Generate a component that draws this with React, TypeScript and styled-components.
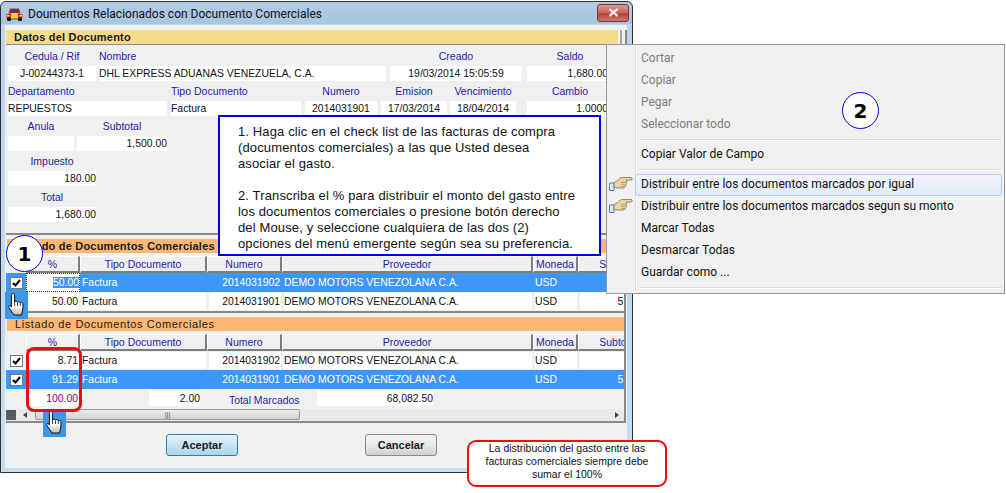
import React from "react";
import styled, { createGlobalStyle } from "styled-components";

const GlobalStyle = createGlobalStyle`
  html, body { margin: 0; padding: 0; background: #fff; }
  body { font-family: "Liberation Sans", Arial, sans-serif; }
`;

const UI_FONT = `Roboto, "Noto Sans", sans-serif`;
const LABEL = "#1c1ca8";
const GRID = "20px 54px 127px 75px 251px 45px 82px";

const Canvas = styled.div`
  position: relative;
  width: 1006px;
  height: 493px;
  overflow: hidden;
`;

const Window = styled.div`
  box-sizing: border-box;
  width: 633px;
  height: 472px;
  margin-top: 1px;
  display: flex;
  flex-direction: column;
  padding: 0 6px 5px 5px;
  background: linear-gradient(#b4cbe2, #a9c4de 22px, #bcd5ea 22px, #c8def0);
  border: 1px solid #2b3138;
  border-radius: 6px 6px 0 0;
`;

const TitleBar = styled.div`
  display: flex;
  align-items: center;
  gap: 5px;
  height: 24px;
  flex: none;
  font-family: ${UI_FONT};
  font-size: 12px;
  color: #111;
`;

const CloseButton = styled.div`
  margin-left: auto;
  margin-right: -3px;
  margin-top: -3px;
  width: 30px;
  height: 16px;
  display: flex;
  align-items: center;
  justify-content: center;
  border: 1px solid #6e3b38;
  border-radius: 3px;
  background: linear-gradient(#dc9a92, #c8625a 50%, #b23f35 55%, #cf7a6e);
`;

const Body = styled.div`
  flex: 1;
  display: flex;
  flex-direction: column;
  min-height: 0;
  background: #f0f0f0;
  box-shadow: 0 0 0 1px #e8f1f8;
`;

const DocHeader = styled.div`
  display: flex;
  height: 20px;
  flex: none;
  box-sizing: border-box;
  padding-top: 4px;
  background: #f0f0f0;
`;

const YellowBar = styled.div`
  width: 612px;
  height: 15px;
  padding-left: 8px;
  box-sizing: border-box;
  background: #f5dc8a;
  border-bottom: 1px solid #8c8c8c;
  font-size: 11px;
  font-weight: bold;
  line-height: 14px;
  letter-spacing: 0.2px;
  color: #1a1a1a;
`;

const Grip = styled.div`
  width: 2px;
  height: 15px;
  margin-left: 2px;
  background: #a8a8a8;
  box-shadow: 5px 0 0 #8a8a8a;
`;

const FormPanel = styled.div`
  flex: none;
  height: 189px;
  box-sizing: border-box;
  padding-left: 2px;
  width: 620px;
  border-bottom: 2px solid #8a8a8a;
`;

const FieldRow = styled.div`
  display: flex;
`;

const Field = styled.div<{ $w: number; $ml?: number; $tall?: boolean }>`
  width: ${(p) => p.$w}px;
  margin-left: ${(p) => p.$ml ?? 0}px;
  flex: none;
  padding-top: ${(p) => (p.$tall ? 1 : 0)}px;
`;

const FieldLabel = styled.div<{ $left?: boolean }>`
  height: 20px;
  line-height: 20px;
  font-size: 10.5px;
  color: ${LABEL};
  text-align: ${(p) => (p.$left ? "left" : "center")};
  white-space: nowrap;
`;

const FieldValue = styled.div<{ $align?: string; $inset?: number }>`
  height: 15px;
  line-height: 15px;
  background: #fff;
  font-size: 10.4px;
  color: #111;
  text-align: ${(p) => p.$align ?? "left"};
  padding-right: ${(p) => p.$inset ?? 0}px;
  white-space: nowrap;
  overflow: hidden;
`;

const ListSection = styled.div<{ $lined?: boolean }>`
  flex: none;
  box-sizing: border-box;
  width: 620px;
  padding-top: 4px;
  overflow: hidden;
  border-right: 2px solid #8a8a8a;
  ${(p) => (p.$lined ? "border-bottom: 2px solid #8a8a8a;" : "")}
`;

const OrangeBar = styled.div<{ $bold?: boolean }>`
  width: 617px;
  margin-left: 1px;
  height: 14px;
  padding-left: 8px;
  box-sizing: border-box;
  background: #feb773;
  font-size: 11px;
  line-height: 14px;
  font-weight: ${(p) => (p.$bold ? "bold" : "normal")};
  letter-spacing: ${(p) => (p.$bold ? "0.2px" : "0.6px")};
  color: #1a1a1a;
`;

const HeadRow = styled.div`
  display: grid;
  grid-template-columns: ${GRID};
  height: 17px;
  margin-top: 3px;
`;

const HeadCell = styled.div`
  box-sizing: border-box;
  height: 17px;
  line-height: 15px;
  font-size: 10.5px;
  color: ${LABEL};
  text-align: center;
  white-space: nowrap;
  overflow: hidden;
  background: #f0f0f0;
  border-top: 1px solid #fff;
  border-left: 1px solid #fff;
  border-right: 2px solid #7d7d7d;
  border-bottom: 2px solid #7d7d7d;
`;

const Row = styled.div<{ $selected?: boolean }>`
  display: grid;
  grid-template-columns: ${GRID};
  width: 618px;
  height: 19px;
  background: ${(p) => (p.$selected ? "#3d97fb" : "transparent")};
  color: ${(p) => (p.$selected ? "#fff" : "#111")};
`;

const Cell = styled.div<{ $selected?: boolean; $align?: string }>`
  margin: 1px 1px 1px 2px;
  padding: 0 1px 0 0;
  line-height: 17px;
  font-size: 10.4px;
  text-align: ${(p) => p.$align ?? "left"};
  white-space: nowrap;
  overflow: hidden;
  background: ${(p) => (p.$selected ? "transparent" : "#fff")};
`;

const FocusCell = styled(Cell)`
  margin: 0;
  background: #fff;
  color: #111;
  outline: 1px dotted #333;
  outline-offset: -1px;
  line-height: 19px;
  padding-right: 1px;
`;

const Marked = styled.span`
  background: #3d97fb;
  color: #fff;
`;

const CheckCell = styled.div`
  display: flex;
  align-items: center;
  justify-content: center;
`;

const CheckBox = styled.div`
  width: 11px;
  height: 10px;
  display: flex;
  align-items: center;
  justify-content: center;
  background: #fff;
  border: 1px solid #777;
`;

const Totals = styled.div`
  display: flex;
  align-items: center;
  height: 19px;
  width: 614px;
  font-size: 10.4px;
`;

const TotalValue = styled.div<{ $w: number; $ml: number; $color?: string }>`
  width: ${(p) => p.$w}px;
  margin-left: ${(p) => p.$ml}px;
  height: 15px;
  line-height: 15px;
  flex: none;
  background: #fff;
  text-align: right;
  color: ${(p) => p.$color ?? "#111"};
`;

const TotalLabel = styled.div`
  margin-left: 29px;
  width: 74px;
  color: ${LABEL};
  white-space: nowrap;
  padding-top: 3px;
`;

const ScrollTrack = styled.div`
  display: flex;
  align-items: center;
  height: 11px;
  margin-top: 1px;
  border-bottom: 2px solid #8a8a8a;
  padding-bottom: 1px;
  background: #e9e9e9;
`;

const ScrollCorner = styled.div`
  width: 10px;
  height: 10px;
  background: #5a5a5a;
`;

const ScrollArrow = styled.div<{ $right?: boolean }>`
  width: 0;
  height: 0;
  margin-left: ${(p) => (p.$right ? "auto" : "7px")};
  margin-right: ${(p) => (p.$right ? "5px" : "0")};
  border-top: 3px solid transparent;
  border-bottom: 3px solid transparent;
  ${(p) => (p.$right ? "border-left: 4px solid #444;" : "border-right: 4px solid #444;")}
`;

const ScrollThumb = styled.div`
  width: 263px;
  height: 9px;
  margin-left: 8px;
  display: flex;
  align-items: center;
  justify-content: center;
  background: linear-gradient(#eee, #cfcfcf);
  border: 1px solid #9a9a9a;
  border-radius: 2px;
  font-size: 7px;
  color: #555;
`;

const ButtonBar = styled.div`
  display: flex;
  padding: 11px 0 0 160px;
  gap: 127px;
`;

const Button = styled.div<{ $primary?: boolean }>`
  width: 72px;
  height: 22px;
  box-sizing: border-box;
  line-height: 20px;
  text-align: center;
  font-size: 11px;
  font-weight: bold;
  color: #1a1a1a;
  border-radius: 3px;
  border: 1px solid ${(p) => (p.$primary ? "#2f7f9f" : "#8a8a8a")};
  background: ${(p) =>
    p.$primary
      ? "linear-gradient(#e4f4fb, #c6e4f3 50%, #a9d5ea)"
      : "linear-gradient(#f4f4f4, #e8e8e8 50%, #cfcfcf)"};
`;

/* Things that lie over the window */

const Callout = styled.div`
  position: absolute;
  left: 218px;
  top: 115px;
  width: 383px;
  height: 141px;
  box-sizing: border-box;
  padding: 7px 8px 0 18px;
  background: #fff;
  border: 2px solid #0000e0;
  font-size: 13px;
  line-height: 16px;
  letter-spacing: 0.13px;
  color: #111;
`;

const CalloutPara = styled.p`
  margin: 0 0 16px;
`;

const Menu = styled.div`
  position: absolute;
  left: 606px;
  top: 44px;
  width: 399px;
  height: 250px;
  box-sizing: border-box;
  padding: 3px 2px;
  background: #f0f0f0;
  border: 1px solid #979797;
  font-family: ${UI_FONT};
  font-size: 12px;
  color: #111;
`;

const MenuGutter = styled.div`
  position: absolute;
  left: 28px;
  top: 2px;
  bottom: 2px;
  width: 1px;
  background: #e2e2e2;
  border-right: 1px solid #fff;
`;

const MenuItem = styled.div<{ $disabled?: boolean; $hover?: boolean }>`
  position: relative;
  height: 22px;
  line-height: 20px;
  box-sizing: border-box;
  padding-left: 32px;
  white-space: nowrap;
  color: ${(p) => (p.$disabled ? "#7d7d7d" : "#111")};
  ${(p) =>
    p.$hover
      ? `
    border: 1px solid #aecff7;
    border-radius: 3px;
    margin-left: 26px;
    padding-left: 5px;
    line-height: 19px;
    background: linear-gradient(#f3f6fb, #dfe9f6);
  `
      : ""}
`;

const MenuRule = styled.div`
  height: 8px;
  margin-left: 30px;
  display: flex;
  align-items: center;
  &::after {
    content: "";
    width: 100%;
    border-top: 1px solid #dcdcdc;
    border-bottom: 1px solid #fff;
  }
`;

const HandSlot = styled.span<{ $hover?: boolean }>`
  position: absolute;
  left: ${(p) => (p.$hover ? "-27px" : "0")};
  top: ${(p) => (p.$hover ? "1px" : "2px")};
  display: flex;
`;

const Step = styled.div<{ $x: number; $y: number }>`
  position: absolute;
  left: ${(p) => p.$x}px;
  top: ${(p) => p.$y}px;
  width: 37px;
  height: 37px;
  box-sizing: border-box;
  display: flex;
  align-items: center;
  justify-content: center;
  background: #fff;
  border: 1px solid #0000e0;
  border-radius: 50%;
  font-family: "DejaVu Sans", sans-serif;
  font-size: 20px;
  font-weight: bold;
  color: #000;
`;

const CursorTile = styled.div<{ $x: number; $y: number }>`
  position: absolute;
  left: ${(p) => p.$x}px;
  top: ${(p) => p.$y}px;
  width: 23px;
  height: 27px;
  background: #3d97e8;
  display: flex;
  align-items: flex-start;
  justify-content: center;
`;

const RedFrame = styled.div`
  position: absolute;
  left: 26px;
  top: 347px;
  width: 56px;
  height: 65px;
  box-sizing: border-box;
  border: 3px solid #ee0d0d;
  border-radius: 8px;
`;

const Note = styled.div`
  position: absolute;
  left: 467px;
  top: 440px;
  width: 200px;
  height: 47px;
  box-sizing: border-box;
  background: #fff;
  border: 2px solid #ee0d0d;
  border-radius: 9px;
  font-size: 10.5px;
  line-height: 13px;
  text-align: center;
  color: #111;
`;

const CarIcon = () => (
  <svg width="17" height="13" viewBox="0 0 17 13">
    <path d="M4 0.500h9l1.500 5h-12z" fill="#d81f1a" />
    <path d="M5 1.500h7l1 3H4z" fill="#3b3b8c" />
    <path d="M0.500 6h16v4h-16z" fill="#d81f1a" />
    <path d="M5.500 5h6l1 5.500h-8z" fill="#f0d92e" />
    <rect x="1" y="7" width="2.500" height="1.500" fill="#ffe27a" />
    <rect x="13.500" y="7" width="2.500" height="1.500" fill="#ffe27a" />
    <rect x="1" y="9.500" width="4" height="3.500" rx="1" fill="#111" />
    <rect x="12" y="9.500" width="4" height="3.500" rx="1" fill="#111" />
    <rect x="5" y="10.500" width="7" height="1" fill="#555" />
  </svg>
);

const HandCursor = () => (
  <svg width="19" height="25" viewBox="0 0 19 25">
    <defs>
      <linearGradient id="glove" x1="0" y1="0" x2="0" y2="1">
        <stop offset="0.55" stopColor="#fff" />
        <stop offset="1" stopColor="#bdbdbd" />
      </linearGradient>
    </defs>
    <path
      d="M6 1.500c1 0 1.600.7 1.600 1.800V10c.4-1 2.600-1 2.900.2.500-.9 2.500-.8 2.800.5.600-.7 2.500-.5 2.600 1 .2 2.200.1 5-.4 6.800L14.600 23H7l-5.200-7.500c-.7-1.200.7-2.600 2-1.600l.6 1V3.300C4.400 2.200 5 1.500 6 1.500z"
      fill="url(#glove)"
      stroke="#111"
      strokeWidth="1"
    />
    <path d="M7.600 10v4M10.500 10.500v3.500M13.300 11v3" stroke="#111" strokeWidth="0.800" fill="none" />
  </svg>
);

const PointingHand = () => (
  <svg width="24" height="16" viewBox="0 0 24 16">
    <path d="M0.500 7h4.500v7.500H0.500z" fill="#dfe7f2" stroke="#4a7fc0" strokeWidth="1" />
    <path
      d="M5 6.500 9 4.500C10 2.500 11.500 1.500 13.500 1.500h8.500c1.600 0 1.600 2.600 0 2.600h-5c1 .3 1 2 0 2.200.8.300.7 2-.2 2.100.5.500.3 2-.7 2.100-.3 1-1 1.300-1.500 1.500H9c-1.500 0-2.500-.5-4-1z"
      fill="#e8d6a8"
      stroke="#86703f"
      strokeWidth="0.800"
    />
    <path d="M12 6.300h5M12 8.400h4.800M12 10.500h3.600" stroke="#a48c56" strokeWidth="0.700" fill="none" />
  </svg>
);

const CheckMark = () => (
  <svg width="9" height="8" viewBox="0 0 9 8">
    <path d="M1 4l2.500 2.500L8 1" fill="none" stroke="#000" strokeWidth="2" />
  </svg>
);

type Doc = {
  pct: string;
  numero: string;
  sub: string;
  selected?: boolean;
  focus?: boolean;
};

const DocRow = ({ doc }: { doc: Doc }) => {
  const s = doc.selected;
  return (
    <Row $selected={s}>
      <CheckCell>
        <CheckBox>
          <CheckMark />
        </CheckBox>
      </CheckCell>
      {doc.focus ? (
        <FocusCell $align="right">
          <Marked>{doc.pct}</Marked>
        </FocusCell>
      ) : (
        <Cell $selected={s} $align="right">
          {doc.pct}
        </Cell>
      )}
      <Cell $selected={s}>Factura</Cell>
      <Cell $selected={s} $align="right">
        {doc.numero}
      </Cell>
      <Cell $selected={s}>DEMO MOTORS VENEZOLANA C.A.</Cell>
      <Cell $selected={s}>USD</Cell>
      <Cell $selected={s} $align="right">
        {doc.sub}
      </Cell>
    </Row>
  );
};

const Heads = () => (
  <HeadRow>
    <span />
    <HeadCell>%</HeadCell>
    <HeadCell>Tipo Documento</HeadCell>
    <HeadCell>Numero</HeadCell>
    <HeadCell>Proveedor</HeadCell>
    <HeadCell>Moneda</HeadCell>
    <HeadCell>Subtotal</HeadCell>
  </HeadRow>
);

const topDocs: Doc[] = [
  { pct: "50.00", numero: "2014031902", sub: "", selected: true, focus: true },
  { pct: "50.00", numero: "2014031901", sub: "5,000.00" },
];

const bottomDocs: Doc[] = [
  { pct: "8.71", numero: "2014031902", sub: "" },
  { pct: "91.29", numero: "2014031901", sub: "5,000.00", selected: true },
];

export default function App() {
  return (
    <Canvas>
      <GlobalStyle />
      <Window>
        <TitleBar>
          <CarIcon />
          <span>Doumentos Relacionados con Documento Comerciales</span>
          <CloseButton>
            <svg width="11" height="9" viewBox="0 0 11 9">
              <path d="M1.500 1l8 7M9.500 1l-8 7" stroke="#fff" strokeWidth="2.200" />
            </svg>
          </CloseButton>
        </TitleBar>
        <Body>
          <DocHeader>
            <YellowBar>Datos del Documento</YellowBar>
            <Grip />
          </DocHeader>
          <FormPanel>
            <FieldRow>
              <Field $w={88}>
                <FieldLabel>Cedula / Rif</FieldLabel>
                <FieldValue $align="center">J-00244373-1</FieldValue>
              </Field>
              <Field $w={287} $ml={3}>
                <FieldLabel $left>Nombre</FieldLabel>
                <FieldValue>DHL EXPRESS ADUANAS VENEZUELA, C.A.</FieldValue>
              </Field>
              <Field $w={132} $ml={4}>
                <FieldLabel>Creado</FieldLabel>
                <FieldValue $align="center">19/03/2014 15:05:59</FieldValue>
              </Field>
              <Field $w={86} $ml={5}>
                <FieldLabel>Saldo</FieldLabel>
                <FieldValue $align="right" $inset={5}>1,680.00</FieldValue>
              </Field>
            </FieldRow>
            <FieldRow>
              <Field $w={159}>
                <FieldLabel $left>Departamento</FieldLabel>
                <FieldValue>REPUESTOS</FieldValue>
              </Field>
              <Field $w={130} $ml={4}>
                <FieldLabel $left>Tipo Documento</FieldLabel>
                <FieldValue>Factura</FieldValue>
              </Field>
              <Field $w={72} $ml={4}>
                <FieldLabel>Numero</FieldLabel>
                <FieldValue $align="center">2014031901</FieldValue>
              </Field>
              <Field $w={66} $ml={4}>
                <FieldLabel>Emision</FieldLabel>
                <FieldValue $align="center">17/03/2014</FieldValue>
              </Field>
              <Field $w={66} $ml={3}>
                <FieldLabel>Vencimiento</FieldLabel>
                <FieldValue $align="center">18/04/2014</FieldValue>
              </Field>
              <Field $w={86} $ml={11}>
                <FieldLabel>Cambio</FieldLabel>
                <FieldValue $align="right" $inset={5}>1.0000</FieldValue>
              </Field>
            </FieldRow>
            <FieldRow>
              <Field $w={66}>
                <FieldLabel>Anula</FieldLabel>
                <FieldValue />
              </Field>
              <Field $w={90} $ml={3}>
                <FieldLabel>Subtotal</FieldLabel>
                <FieldValue $align="right">1,500.00</FieldValue>
              </Field>
            </FieldRow>
            <FieldRow>
              <Field $w={88}>
                <FieldLabel>Impuesto</FieldLabel>
                <FieldValue $align="right">180.00</FieldValue>
              </Field>
            </FieldRow>
            <FieldRow>
              <Field $w={88} $tall>
                <FieldLabel>Total</FieldLabel>
                <FieldValue $align="right">1,680.00</FieldValue>
              </Field>
            </FieldRow>
          </FormPanel>
          <ListSection $lined>
            <OrangeBar $bold>Listado de Documentos Comerciales</OrangeBar>
            <Heads />
            {topDocs.map((d) => (
              <DocRow key={d.numero} doc={d} />
            ))}
          </ListSection>
          <ListSection>
            <OrangeBar>Listado de Documentos Comerciales</OrangeBar>
            <Heads />
            {bottomDocs.map((d) => (
              <DocRow key={d.numero} doc={d} />
            ))}
            <Totals>
              <TotalValue $w={50} $ml={22} $color="#800080">
                100.00
              </TotalValue>
              <TotalValue $w={51} $ml={71}>
                2.00
              </TotalValue>
              <TotalLabel>Total Marcados</TotalLabel>
              <TotalValue $w={116} $ml={14}>
                68,082.50
              </TotalValue>
            </Totals>
            <ScrollTrack>
              <ScrollCorner />
              <ScrollArrow />
              <ScrollThumb>|||</ScrollThumb>
              <ScrollArrow $right />
            </ScrollTrack>
          </ListSection>
          <ButtonBar>
            <Button $primary>Aceptar</Button>
            <Button>Cancelar</Button>
          </ButtonBar>
        </Body>
      </Window>

      <Callout>
        <CalloutPara>
          1. Haga clic en el check list de las facturas de compra
          <br />
          (documentos comerciales) a las que Usted desea
          <br />
          asociar el gasto.
        </CalloutPara>
        <CalloutPara>
          2. Transcriba el % para distribuir el monto del gasto entre
          <br />
          los documentos comerciales o presione botón derecho
          <br />
          del Mouse, y seleccione cualquiera de las dos (2)
          <br />
          opciones del menú emergente según sea su preferencia.
        </CalloutPara>
      </Callout>

      <Menu>
        <MenuGutter />
        <MenuItem $disabled>Cortar</MenuItem>
        <MenuItem $disabled>Copiar</MenuItem>
        <MenuItem $disabled>Pegar</MenuItem>
        <MenuItem $disabled>Seleccionar todo</MenuItem>
        <MenuRule />
        <MenuItem>Copiar Valor de Campo</MenuItem>
        <MenuRule />
        <MenuItem $hover>
          <HandSlot $hover>
            <PointingHand />
          </HandSlot>
          Distribuir entre los documentos marcados por igual
        </MenuItem>
        <MenuItem>
          <HandSlot>
            <PointingHand />
          </HandSlot>
          Distribuir entre los documentos marcados segun su monto
        </MenuItem>
        <MenuItem>Marcar Todas</MenuItem>
        <MenuItem>Desmarcar Todas</MenuItem>
        <MenuItem>Guardar como ...</MenuItem>
        <MenuRule />
      </Menu>

      <Step $x={6} $y={235}>1</Step>
      <Step $x={842} $y={92}>2</Step>
      <CursorTile $x={5} $y={292}>
        <HandCursor />
      </CursorTile>
      <CursorTile $x={43} $y={410}>
        <HandCursor />
      </CursorTile>
      <RedFrame />
      <Note>
        La distribución del gasto entre las
        <br />
        facturas comerciales siempre debe
        <br />
        sumar el 100%
      </Note>
    </Canvas>
  );
}
